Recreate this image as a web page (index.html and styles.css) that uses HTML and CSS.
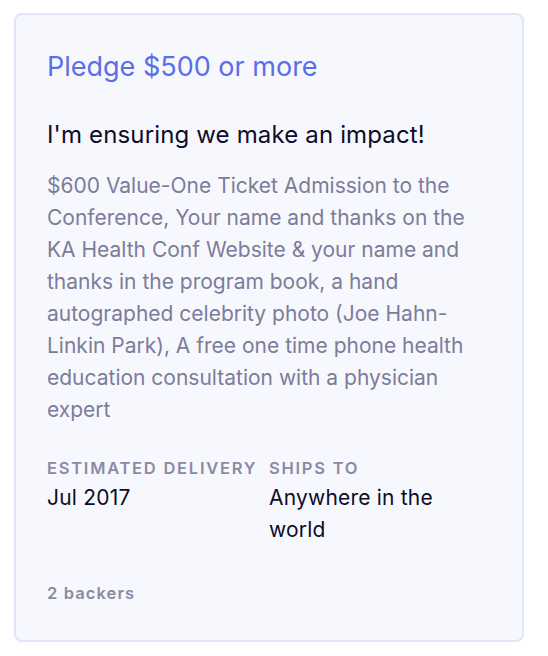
FILE: index.html
```html
<!DOCTYPE html>
<html lang="en">
<head>
    <meta charset="UTF-8">
    <meta name="viewport" content="width=device-width, initial-scale=1.0">
    <title>Pledge</title>
    <link rel="stylesheet" href="styles.css">
</head>
<body>
    <div class="reward-card">
        <h2 class="reward-amount">Pledge $500 or more</h2>
        <h3 class="reward-title">I'm ensuring we make an impact!</h3>
        <p class="reward-desc">$600 Value-One Ticket Admission to the Conference, Your name and thanks on the KA Health Conf Website &amp; your name and thanks in the program book, a hand autographed celebrity photo (Joe Hahn-Linkin Park), A free one time phone health education consultation with a physician expert</p>
        <div class="reward-meta">
            <div class="meta-item">
                <span class="meta-label">Estimated delivery</span>
                <span class="meta-value">Jul 2017</span>
            </div>
            <div class="meta-item">
                <span class="meta-label">Ships to</span>
                <span class="meta-value ships">Anywhere in the world</span>
            </div>
        </div>
        <div class="backers">2 backers</div>
    </div>
</body>
</html>
```

FILE: styles.css
```css
body {
    font-family: Inter, "Liberation Sans", Arial, sans-serif;
    margin: 0;
    padding: 13px 24px 16px 14px;
    background: #fff;
}

.reward-card {
    background: #f7f8fd;
    border: 2px solid #e0e5f9;
    border-radius: 8px;
    padding: 34px 32px 36px 31px;
}

.reward-amount {
    margin: 0;
    font-size: 27px;
    font-weight: normal;
    line-height: 36px;
    color: #5a6fe8;
}

.reward-title {
    margin: 35px 0 0;
    font-size: 24px;
    font-weight: normal;
    letter-spacing: 0.15px;
    line-height: 30px;
    color: #0d0d2a;
}

.reward-desc {
    margin: 20px 0 0;
    font-size: 21px;
    line-height: 32px;
    color: #7c7c9a;
}

.reward-meta {
    display: grid;
    grid-template-columns: 222px 1fr;
    margin-top: 31px;
}

.meta-item {
    display: flex;
    flex-direction: column;
}

.meta-label {
    font-size: 16.5px;
    font-weight: 600;
    text-transform: uppercase;
    letter-spacing: 1.75px;
    line-height: 22px;
    color: #8a8aa6;
}

.meta-value {
    margin-top: 3px;
    font-size: 21px;
    letter-spacing: 0.2px;
    line-height: 32px;
    color: #0d0d2a;
}

.ships {
    max-width: 180px;
}

.backers {
    margin-top: 36px;
    font-size: 16.5px;
    font-weight: 600;
    letter-spacing: 1.1px;
    line-height: 22px;
    color: #8a8aa6;
}
```
